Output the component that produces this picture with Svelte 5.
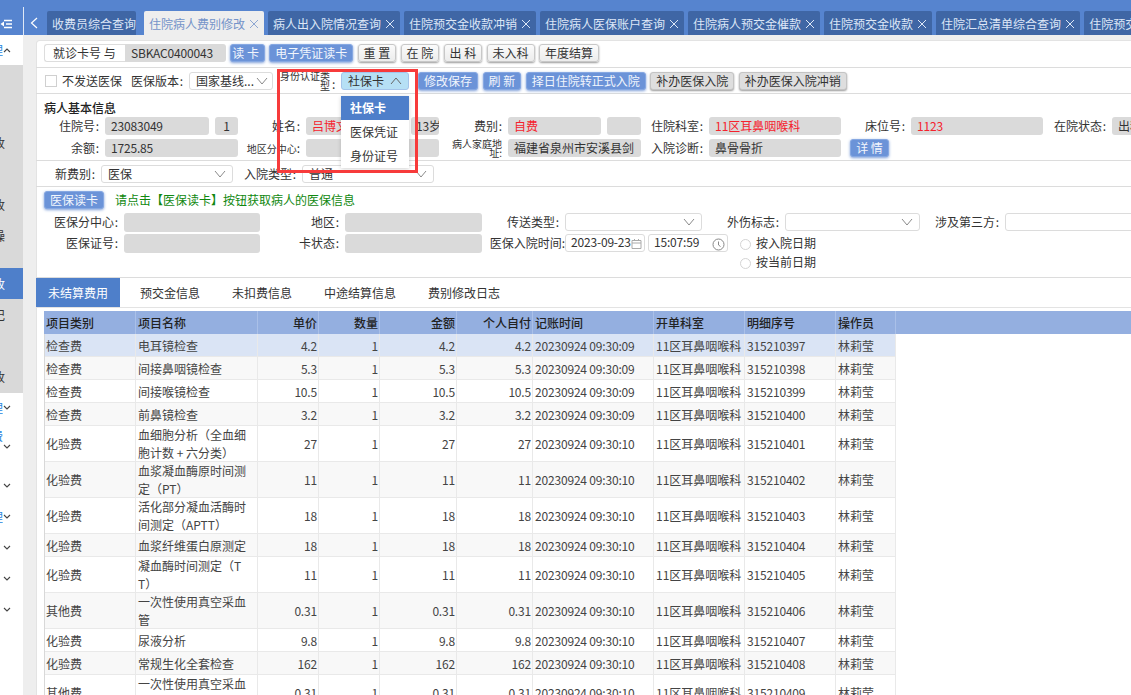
<script>
  const topTabs = [
    { name: "收费员综合查询", noClose: true },
    { name: "住院病人费别修改", active: true },
    { name: "病人出入院情况查询" },
    { name: "住院预交金收款冲销" },
    { name: "住院病人医保账户查询" },
    { name: "住院病人预交金催款" },
    { name: "住院预交金收款" },
    { name: "住院汇总清单综合查询" },
    { name: "住院预交金收款冲销" },
  ];

  const grayMenu = [
    { h: 62 },
    { h: 31, t: "收" },
    { h: 31 },
    { h: 31, t: "收" },
    { h: 31, t: "操" },
    { h: 17 },
    { h: 31, t: "收", active: true },
    { h: 31, t: "记" },
    { h: 31 },
    { h: 31, t: "收" },
  ];

  const whiteMenu = [
    { h: 29, t: "理", link: true },
    { h: 48, t: "费", link: true, up: true },
    { h: 31 },
    { h: 31, t: "理", link: true },
    { h: 31 },
    { h: 31 },
    { h: 31 },
  ];

  const subTabs = ["未结算费用", "预交金信息", "未扣费信息", "中途结算信息", "费别修改日志"];

  const T9 = "20230924 09:30:09";
  const T10 = "20230924 09:30:10";
  const rows = [
    ["检查费", "电耳镜检查", "4.2", T9, 397],
    ["检查费", "间接鼻咽镜检查", "5.3", T9, 398],
    ["检查费", "间接喉镜检查", "10.5", T9, 399],
    ["检查费", "前鼻镜检查", "3.2", T9, 400],
    ["化验费", "血细胞分析（全血细\n胞计数 + 六分类）", "27", T10, 401],
    ["化验费", "血浆凝血酶原时间测\n定（PT）", "11", T10, 402],
    ["化验费", "活化部分凝血活酶时\n间测定（APTT）", "18", T10, 403],
    ["化验费", "血浆纤维蛋白原测定", "18", T10, 404],
    ["化验费", "凝血酶时间测定（T\nT）", "11", T10, 405],
    ["其他费", "一次性使用真空采血\n管", "0.31", T10, 406],
    ["化验费", "尿液分析", "9.8", T10, 407],
    ["化验费", "常规生化全套检查", "162", T10, 408],
    ["其他费", "一次性使用真空采血\n管", "0.31", T10, 409],
  ];
</script>

{#snippet chevron()}
  <svg class="chev" width="12" height="8" viewBox="0 0 12 8"><path d="M1 1l5 6 5-6" fill="none" stroke="#8a8a8a" /></svg>
{/snippet}

{#snippet tiny(text)}
  <svg class="tiny-chev" width="8" height="5" viewBox="0 0 8 5"><path d={text} fill="none" stroke="#444" stroke-width="1.1" /></svg>
{/snippet}

<div class="app">
  <aside class="side">
    <div class="side-top">
      <svg width="13" height="10" viewBox="0 0 13 10">
        <path d="M4 1.5h8M6 5h6M4 8.500h8" stroke="#fff" stroke-width="1.500" />
        <path d="M0.500 5L4 2.500v5z" fill="#fff" />
      </svg>
    </div>
    <div class="side-first">
      <span class="frag link">理</span>
      {@render tiny("M1 4l3-3 3 3")}
    </div>
    <div class="side-gray">
      {#each grayMenu as m}
        <div class="side-row" class:on={m.active} style="height:{m.h}px">
          {#if m.t}<span class="frag">{m.t}</span>{/if}
        </div>
      {/each}
    </div>
    <div class="side-white">
      {#each whiteMenu as m}
        <div class="side-row" style="height:{m.h}px">
          <span class="frag link" class:up={m.up}>{m.t ?? ""}</span>
          {@render tiny("M1 1l3 3 3-3")}
        </div>
      {/each}
    </div>
  </aside>

  <div class="main">
    <header class="topbar">
      <button class="back" aria-label="back">
        <svg width="8" height="12" viewBox="0 0 8 12"><path d="M7 1L1.500 6 7 11" fill="none" stroke="#fff" stroke-width="1.200" /></svg>
      </button>
      <nav class="tabs">
        {#each topTabs as tab}
          <div class="tab" class:active={tab.active} class:plain={tab.noClose}>
            <span>{tab.name}</span>
            {#if !tab.noClose}
              <svg width="10" height="10" viewBox="0 0 10 10"><path d="M1 1l8 8M9 1l-8 8" stroke="currentColor" /></svg>
            {/if}
          </div>
        {/each}
      </nav>
    </header>

    <div class="body">
      <div class="card">
        <section class="s1">
          <span class="card-type">就诊卡号 与</span>
          <span class="card-no num">SBKAC0400043</span>
          <button class="btn blue first">读 卡</button>
          <button class="btn blue">电子凭证读卡</button>
          <button class="btn">重 置</button>
          <button class="btn">在 院</button>
          <button class="btn">出 科</button>
          <button class="btn">未入科</button>
          <button class="btn">年度结算</button>
        </section>

        <section class="s2">
          <span class="check"></span>
          <span class="t-nosend">不发送医保</span>
          <span class="t-ver">医保版本 :</span>
          <div class="select ver"><span>国家基线...</span>{@render chevron()}</div>
          <span class="tiny-label idtype"><span>身份认证类型</span><b>:</b></span>
          <div class="select open">
            <span>社保卡</span>
            <svg class="chev" width="12" height="8" viewBox="0 0 12 8"><path d="M1 7l5-6 5 6" fill="none" stroke="#666" /></svg>
          </div>
          <button class="btn blue save">修改保存</button>
          <button class="btn blue">刷 新</button>
          <button class="btn blue">择日住院转正式入院</button>
          <button class="btn gray">补办医保入院</button>
          <button class="btn gray">补办医保入院冲销</button>

          <ul class="dropdown">
            <li class="sel">社保卡</li>
            <li>医保凭证</li>
            <li>身份证号</li>
          </ul>
          <div class="mark"></div>
        </section>

        <section class="s3">
          <h4>病人基本信息</h4>
          <div class="info">
            <label>住院号 :</label>
            <div class="f num">23083049</div>
            <div class="f num c">1</div>
            <label>姓名 :</label>
            <div class="f red">吕博文</div>
            <div class="f num nopad">13岁</div>
            <label>费别 :</label>
            <div class="f red">自费</div>
            <div class="f"></div>
            <label>住院科室 :</label>
            <div class="f red">11区耳鼻咽喉科</div>
            <label>床位号 :</label>
            <div class="f red num">1123</div>
            <label>在院状态 :</label>
            <div class="f">出科</div>

            <label>余额 :</label>
            <div class="f num span2">1725.85</div>
            <label class="tiny-label one"><span>地区分中心</span><b>:</b></label>
            <div class="f span2"></div>
            <label class="tiny-label addr">病人家庭地址:</label>
            <div class="f span2">福建省泉州市安溪县剑</div>
            <label>入院诊断 :</label>
            <div class="f">鼻骨骨折</div>
            <button class="btn blue detail">详 情</button>
          </div>
        </section>

        <section class="s4">
          <label>新费别 :</label>
          <div class="select"><span>医保</span>{@render chevron()}</div>
          <label>入院类型 :</label>
          <div class="select"><span>普通</span>{@render chevron()}</div>
        </section>

        <section class="s5">
          <div class="read">
            <button class="btn blue">医保读卡</button>
            <span class="hint">请点击【医保读卡】按钮获取病人的医保信息</span>
          </div>
          <div class="ins">
            <label>医保分中心 :</label>
            <div class="f"></div>
            <label>地区 :</label>
            <div class="f"></div>
            <label>传送类型 :</label>
            <div class="select">{@render chevron()}</div>
            <label>外伤标志 :</label>
            <div class="select">{@render chevron()}</div>
            <label>涉及第三方 :</label>
            <div class="select third">{@render chevron()}</div>

            <label>医保证号 :</label>
            <div class="f"></div>
            <label>卡状态 :</label>
            <div class="f"></div>
            <label class="wide">医保入院时间:</label>
            <div class="when">
              <div class="date num">
                <span>2023-09-23</span>
                <svg width="11" height="11" viewBox="0 0 11 11"><path d="M1 2.500h9v8H1zM1 5h9M3.500 1v2M7.500 1v2" fill="none" stroke="#aaa" /></svg>
              </div>
              <div class="date time num">
                <span>15:07:59</span>
                <svg width="13" height="13" viewBox="0 0 13 13"><circle cx="6.500" cy="6.500" r="5.500" fill="none" stroke="#888" /><path d="M6.500 3.500v3.500l2 1.500" fill="none" stroke="#888" /></svg>
              </div>
              <div class="radios">
                <div class="radio"><i></i>按入院日期</div>
                <div class="radio"><i></i>按当前日期</div>
              </div>
            </div>
          </div>
        </section>

        <nav class="subtabs">
          {#each subTabs as name, i}
            <div class="subtab" class:active={i === 0}>{name}</div>
          {/each}
        </nav>

        <div class="table-wrap">
          <table>
            <colgroup>
              <col class="c92" /><col class="c122" /><col class="c61" /><col class="c61" /><col class="c77" />
              <col class="c76" /><col class="c121" /><col class="c91" /><col class="c91" /><col class="c60" /><col />
            </colgroup>
            <thead>
              <tr>
                <th class="first">项目类别</th>
                <th>项目名称</th>
                <th class="r">单价</th>
                <th class="r">数量</th>
                <th class="r">金额</th>
                <th class="r">个人自付</th>
                <th>记账时间</th>
                <th>开单科室</th>
                <th>明细序号</th>
                <th>操作员</th>
                <th class="rest"></th>
              </tr>
            </thead>
            <tbody>
              {#each rows as row, i}
                <tr class:selected={i === 0} class:odd={i % 2 === 1}>
                  <td class="first">{row[0]}</td>
                  <td class="name">{row[1]}</td>
                  <td class="r num">{row[2]}</td>
                  <td class="r num">1</td>
                  <td class="r num">{row[2]}</td>
                  <td class="r num">{row[2]}</td>
                  <td class="num">{row[3]}</td>
                  <td>11区耳鼻咽喉科</td>
                  <td class="num">{315210000 + row[4]}</td>
                  <td>林莉莹</td>
                </tr>
              {/each}
            </tbody>
          </table>
        </div>
      </div>
    </div>
  </div>
</div>

<style>
  :global(body) {
    margin: 0;
    background: #fff;
  }

  .app {
    display: flex;
    width: 1131px;
    height: 695px;
    overflow: hidden;
    font: 12px/18px "Noto Sans CJK SC", sans-serif;
    color: #333;
  }

  .num {
    letter-spacing: -0.18px;
  }

  /* left menu, mostly cut off by the collapsed width */
  .side {
    width: 23px;
    flex: none;
    background: #fff;
  }
  .side-top {
    height: 35px;
    background: #5684cf;
    box-sizing: border-box;
    padding: 19px 0 0 0;
  }
  .side-top svg {
    display: block;
  }
  .side-first {
    height: 30px;
    display: flex;
    align-items: center;
  }
  .side-gray {
    background: #d9d9d9;
    height: 328px;
  }
  .side-row {
    display: flex;
    align-items: center;
  }
  .side-row.on {
    background: #4e7fca;
    color: #fff;
  }
  .frag {
    width: 5px;
    height: 18px;
    overflow: hidden;
    display: flex;
    justify-content: flex-end;
    flex: none;
  }
  .frag.link {
    width: 3px;
    color: #2a86e0;
  }
  .frag.up {
    margin-top: -20px;
  }
  .tiny-chev {
    flex: none;
  }

  .main {
    flex: 1;
    min-width: 0;
    display: flex;
    flex-direction: column;
  }

  .topbar {
    height: 35px;
    flex: none;
    display: flex;
    background: #5684cf;
    box-sizing: border-box;
    padding-top: 11px;
    overflow: hidden;
    position: relative;
  }
  .topbar::before {
    content: "";
    position: absolute;
    left: 0;
    top: 7px;
    bottom: 0;
    width: 1px;
    background: #dfe8f6;
  }
  .back {
    width: 24px;
    flex: none;
    border: 0;
    padding: 0 0 0 1px;
    background: none;
  }
  .back svg {
    display: block;
    margin: -1px 0 0 6px;
  }
  .tabs {
    display: flex;
    gap: 4px;
    white-space: nowrap;
  }
  .tab {
    display: flex;
    align-items: center;
    gap: 4px;
    padding: 1px 5px 0;
    height: 24px;
    box-sizing: border-box;
    background: #3f66a5;
    color: #dde7f7;
    border-radius: 2px 2px 0 0;
  }
  .tab.plain {
    padding-right: 0;
    margin-right: 4px;
  }
  .tab.active {
    background: #eeeeee;
    color: #7493c9;
  }
  .tab.active svg {
    color: #8ea7d2;
  }
  .tab svg {
    flex: none;
  }

  .body {
    flex: 1;
    min-height: 0;
    background: #eeeeee;
    padding: 5px 0 0 13px;
  }
  .card {
    height: 100%;
    background: #fff;
    border-radius: 3px 0 0 0;
    box-shadow: inset 1px 1px 0 #e3e3e3;
  }

  section {
    box-sizing: border-box;
    border-bottom: 1px solid #dcdcdc;
  }

  button {
    font: inherit;
  }
  .btn {
    height: 18px;
    padding: 0 5px 1px;
    box-sizing: border-box;
    border: 1px solid #c8c8c8;
    border-radius: 3px;
    background: linear-gradient(#fbfbfb, #ececec);
    color: #333;
    line-height: 15px;
    white-space: nowrap;
    box-shadow: 0 1px 2px #9a9a9a;
    flex: none;
  }
  .btn.blue {
    background: #6b93d8;
    border-color: #86a8e2;
    color: #f2f6fd;
    box-shadow: 0 1px 3px #7f9fd8;
  }
  .btn.gray {
    background: #dedede;
    border-color: #c4c4c4;
  }

  .s1 {
    height: 28px;
    display: flex;
    align-items: center;
    gap: 4.3px;
    padding: 0 0 1px 8px;
  }
  .card-type {
    width: 81px;
    height: 18px;
    box-sizing: border-box;
    border: 1px solid #ddd;
    border-right: 0;
    border-radius: 3px 0 0 3px;
    padding-left: 8px;
    margin-right: -4.3px;
    line-height: 15px;
    white-space: nowrap;
  }
  .card-no {
    width: 101px;
    height: 18px;
    background: #dadada;
    border-radius: 0 3px 3px 0;
    padding-left: 6px;
    box-sizing: border-box;
    line-height: 17px;
  }

  .select {
    height: 18px;
    box-sizing: border-box;
    border: 1px solid #dcdcdc;
    border-radius: 3px;
    background: #fff;
    display: flex;
    align-items: center;
    padding: 0 6px;
    line-height: 16px;
    min-width: 0;
    white-space: nowrap;
  }
  .chev {
    margin-left: auto;
    flex: none;
  }

  .s2 {
    height: 26px;
    display: flex;
    align-items: center;
    padding-left: 9px;
    position: relative;
  }
  .check {
    width: 12px;
    height: 12px;
    box-sizing: border-box;
    border: 1px solid #d0d0d0;
    background: #fff;
    margin-right: 5px;
    flex: none;
  }
  .t-nosend {
    margin-right: 9px;
  }
  .t-ver {
    margin-right: 6px;
    width: 52px;
    white-space: nowrap;
    word-spacing: -2px;
  }
  .select.ver {
    width: 84px;
    padding-right: 4px;
    margin-right: 7px;
  }
  .tiny-label {
    font-size: 10px;
    line-height: 9.500px;
    text-align: right;
    color: #333;
  }
  .tiny-label b {
    font: 12px/18px "Noto Sans CJK SC", sans-serif;
  }
  .idtype {
    width: 55px;
    margin-right: 6px;
    display: flex;
    align-items: center;
    position: relative;
  }
  .idtype span {
    width: 50px;
    flex: none;
  }
  .idtype b {
    margin: 6px 0 0 2px;
  }
  .select.open {
    width: 68px;
    background: #b6e0f5;
    border-color: #a4c4ea;
    margin-right: 9px;
  }
  .s2 .btn {
    margin-right: 4.500px;
  }
  .dropdown {
    position: absolute;
    left: 305px;
    top: 28px;
    width: 68px;
    margin: 0;
    padding: 0;
    list-style: none;
    background: #fff;
    box-shadow: 0 1px 4px rgba(0, 0, 0, 0.18);
    z-index: 3;
  }
  .dropdown li {
    height: 24px;
    line-height: 24px;
    padding-left: 9px;
  }
  .dropdown .sel {
    background: #4e7fca;
    color: #fff;
    font-weight: 700;
  }
  .mark {
    position: absolute;
    left: 241px;
    top: 1px;
    width: 135px;
    height: 98px;
    border: 3px solid #f73b3b;
    z-index: 4;
    pointer-events: none;
  }

  .s3 {
    height: 67px;
    padding: 6px 0 0 8px;
  }
  h4 {
    margin: 0 0 2px;
    font-size: 12px;
    font-weight: 500;
    line-height: 15px;
    color: #222;
  }
  .info {
    display: grid;
    margin-left: -8px;
    grid-template-columns: 63px 104px 23px 56px 99px 28px 57px 93px 34px 56px 132px 58px 132px 57px 100px;
    grid-auto-rows: 18px;
    column-gap: 6px;
    row-gap: 4px;
  }
  label {
    text-align: right;
    white-space: nowrap;
    word-spacing: -2px;
  }
  .f {
    background: #dadada;
    border-radius: 3px;
    padding: 0 6px;
    height: 18px;
    white-space: nowrap;
    overflow: hidden;
    min-width: 0;
  }
  .f.nopad {
    padding: 0 0 0 5px;
  }
  .f.c {
    text-align: center;
    padding: 0;
  }
  .span2 {
    grid-column: span 2;
  }
  .red {
    color: #f5222d;
  }
  .tiny-label.one {
    white-space: nowrap;
    margin-left: -2px;
  }
  .tiny-label.addr {
    white-space: normal;
    line-height: 9px;
    padding-left: 2px;
  }
  .detail {
    margin-left: 3px;
    width: 39px;
    justify-self: start;
  }

  .s4 {
    height: 26px;
    display: grid;
    grid-template-columns: 59px 132px 57px 132px;
    column-gap: 6px;
    align-items: center;
  }

  .s5 {
    height: 91px;
    padding-top: 4px;
    overflow: visible;
  }
  .read {
    display: flex;
    align-items: center;
    padding-left: 8px;
    gap: 11px;
  }
  .hint {
    color: #10880f;
  }
  .ins {
    display: grid;
    margin-top: 4px;
    grid-template-columns: 82px 136px 73px 137px 71px 137px 71px 135px 73px 140px;
    grid-auto-rows: 19px;
    column-gap: 6px;
    row-gap: 2px;
  }
  .ins .f {
    height: 19px;
  }
  .ins .select {
    height: 18px;
  }
  .ins label {
    line-height: 17px;
  }
  .select.third {
    width: 150px;
  }
  .select.third .chev {
    margin-left: 120px;
  }
  .wide {
    margin-left: -6px;
    margin-right: -6px;
  }
  .when {
    grid-column: span 5;
    display: flex;
    align-items: flex-start;
  }
  .date {
    width: 80px;
    height: 18px;
    box-sizing: border-box;
    border: 1px solid #dcdcdc;
    border-radius: 3px;
    padding: 0 0 2px 5px;
    margin-right: 3px;
    display: flex;
    align-items: center;
    position: relative;
    white-space: nowrap;
  }
  .date svg {
    position: absolute;
    right: 2px;
    top: 3px;
  }
  .radios {
    margin-left: 9px;
    margin-top: -1px;
  }
  .radio {
    display: flex;
    align-items: center;
    height: 19px;
    gap: 5px;
  }
  .radio i {
    width: 11px;
    height: 11px;
    box-sizing: border-box;
    border: 1px solid #d4d4d4;
    border-radius: 50%;
    margin-top: 4px;
  }

  .subtabs {
    height: 30px;
    box-sizing: border-box;
    display: flex;
    gap: 8px;
    border-bottom: 1px solid #e3e3e3;
  }
  .subtab {
    padding: 0 12px;
    line-height: 29px;
  }
  .subtab.active {
    background: #4e7fca;
    color: #fff;
  }

  .table-wrap {
    padding: 3px 0 0 8px;
  }
  table {
    width: 1087px;
    table-layout: fixed;
    border-collapse: separate;
    border-spacing: 0;
  }
  .c92 { width: 92px; }
  .c122 { width: 122px; }
  .c61 { width: 61px; }
  .c77 { width: 77px; }
  .c76 { width: 76px; }
  .c121 { width: 121px; }
  .c91 { width: 91px; }
  .c60 { width: 60px; }

  th,
  td {
    box-sizing: border-box;
    height: 23px;
    padding: 0 2px;
    text-align: left;
    white-space: pre-line;
    overflow: hidden;
  }
  th {
    background: #94afe0;
    font-weight: 500;
    color: #222;
    box-shadow: inset -1px 0 0 #aac0e8;
    padding-top: 1px;
  }
  th.rest {
    box-shadow: none;
  }
  td {
    color: #444;
    box-shadow: inset -1px -1px 0 #e9e9e9;
  }
  .first {
    padding-left: 1px;
    border-left: 1px solid #d8d8d8;
  }
  th.first {
    border-left-color: #94afe0;
  }
  th.r,
  td.r {
    text-align: right;
  }
  tr.odd td {
    background: #f8f8f8;
  }
  tr.selected td {
    background: #dae4f5;
  }
</style>
